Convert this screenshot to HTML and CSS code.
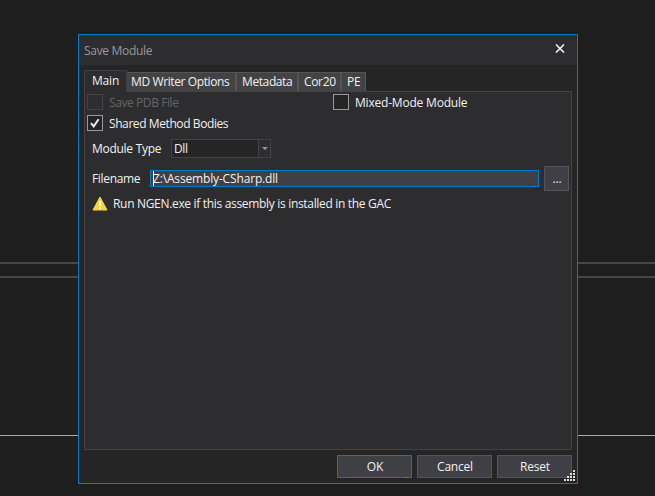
FILE: index.html
```
<!DOCTYPE html>
<html lang="en">
<head>
<meta charset="utf-8">
<title>Save Module</title>
<link rel="stylesheet" href="styles.css">
</head>
<body>
<div class="rules"></div>
<main class="dialog">
  <header class="titlebar">
    <span class="title">Save Module</span>
    <svg class="close" width="10" height="9" viewBox="0 0 10 9"><path d="M1 .5 9 8.5M9 .5 1 8.5" fill="none" stroke="#f1f1f1" stroke-width="1.6"/></svg>
  </header>
  <nav class="tabs">
    <span class="tab active t-main">Main</span>
    <span class="tab t-md">MD Writer Options</span>
    <span class="tab t-meta">Metadata</span>
    <span class="tab t-cor">Cor20</span>
    <span class="tab t-pe">PE</span>
  </nav>
  <section class="panel">
    <div class="checks">
      <label class="check tight disabled"><i class="box"></i><span>Save PDB File</span></label>
      <label class="check"><i class="box"></i><span>Mixed-Mode Module</span></label>
      <label class="check tight"><i class="box"><svg width="14" height="14" viewBox="0 0 14 14"><path d="M3 7.2 5.7 10.3 10.6 3.2" fill="none" stroke="#f1f1f1" stroke-width="2"/></svg></i><span>Shared Method Bodies</span></label>
    </div>
    <div class="row type-row">
      <span class="name type">Module Type</span>
      <div class="combo"><span>Dll</span><i class="drop"><svg width="6" height="3" viewBox="0 0 6 3"><path d="M0 0h6L3 3z" fill="#999"/></svg></i></div>
    </div>
    <div class="row file-row">
      <span class="name file">Filename</span>
      <div class="input"><i class="caret"></i><span>Z:\Assembly-CSharp.dll</span></div>
      <div class="button browse">...</div>
    </div>
    <div class="row note">
      <svg width="16" height="15" viewBox="0 0 16 15"><path d="M8 1 15 14H1z" fill="#fcd23c" stroke="#fcd23c" stroke-linejoin="round"/><path d="M7 5h2v5H7zM7 11h2v2H7z" fill="#fff"/></svg>
      <span>Run NGEN.exe if this assembly is installed in the GAC</span>
    </div>
  </section>
  <footer class="actions">
    <div class="button default">OK</div>
    <div class="button">Cancel</div>
    <div class="button">Reset</div>
  </footer>
  <svg class="grip" width="11" height="11" viewBox="0 0 11 11"><path d="M9 0h2v2H9zM6 3h2v2H6zM9 3h2v2H9zM3 6h2v2H3zM6 6h2v2H6zM9 6h2v2H9zM0 9h2v2H0zM3 9h2v2H3zM6 9h2v2H6zM9 9h2v2H9z" fill="#ddd"/></svg>
</main>
</body>
</html>
```
FILE: styles.css
```
* { box-sizing: border-box; }
body {
  margin: 0;
  width: 655px;
  height: 496px;
  overflow: hidden;
  padding: 34px 0 0 78px;
  background: #1e1e1e;
  color: #f1f1f1;
  font: 12px/16px "Open Sans", "Noto Sans", sans-serif;
  letter-spacing: -0.2px;
  white-space: nowrap;
}
.rules {
  position: absolute;
  z-index: -1;
  left: 0;
  top: 262px;
  width: 655px;
  height: 174px;
  border-top: 2px solid #464646;
  border-bottom: 1px solid #aaa;
}
.rules::before {
  content: "";
  display: block;
  margin-top: 12px;
  height: 2px;
  background: #464646;
}
.dialog {
  position: relative;
  width: 500px;
  height: 450px;
  border: 1px solid #007acc;
  background: #252526;
}
.titlebar {
  display: flex;
  justify-content: space-between;
  height: 30px;
  padding: 8px 12px 0 5px;
  background: #2d2d30;
  color: #999;
  letter-spacing: -0.3px;
}
.close { margin-top: 1px; }
.tabs {
  display: flex;
  align-items: flex-end;
  height: 26px;
  padding-left: 5px;
}
.tab {
  height: 19px;
  padding: 1px 0 0 5px;
  background: #434346;
  border: 1px solid #555558;
  border-width: 1px 1px 0 0;
}
.tab + .tab + .tab { border-left-width: 1px; }
.tab.active {
  height: 22px;
  width: 43px;
  margin-bottom: -1px;
  padding: 2px 0 0 7px;
  background: #2d2d30;
  border: 1px solid #3f3f46;
  border-bottom: 0;
  z-index: 1;
}
.tab.t-md { width: 109px; padding-left: 4px; letter-spacing: -0.39px; }
.t-meta { width: 62px; letter-spacing: -0.4px; }
.t-cor { width: 43px; letter-spacing: -0.35px; }
.t-pe { width: 25px; }
.panel {
  width: 488px;
  height: 359px;
  margin-left: 5px;
  padding: 2px;
  background: #2d2d30;
  border: 1px solid #434346;
}
.checks {
  display: grid;
  grid-template-columns: 246px 1fr;
  row-gap: 5px;
}
.check { display: flex; gap: 6px; height: 16px; line-height: 18px; }
.tight { letter-spacing: -0.41px; }
.box {
  width: 16px;
  height: 16px;
  border: 1px solid #999;
  background: #252526;
}
.box svg { display: block; }
.disabled { color: #656565; }
.disabled .box { border-color: #434346; background: #2d2d30; }
.row { display: flex; padding-left: 5px; }
.type-row { margin-top: 8px; align-items: center; }
.type { width: 79px; letter-spacing: -0.28px; }
.file { width: 58px; letter-spacing: -0.33px; }
.combo {
  display: flex;
  justify-content: space-between;
  width: 100px;
  height: 19px;
  padding-left: 2px;
  border: 1px solid #434346;
  background: #252526;
  line-height: 18px;
  letter-spacing: -0.4px;
}
.drop {
  display: grid;
  place-items: center;
  width: 12px;
  border-left: 1px solid #434346;
  background: #2d2d30;
}
.file-row { margin-top: 8px; align-items: center; }
.input {
  display: flex;
  width: 389px;
  height: 17px;
  padding-left: 2px;
  border: 1px solid #007acc;
  background: #3f3f46;
  line-height: 15px;
  letter-spacing: -0.16px;
}
.caret { width: 1px; height: 15px; margin-right: -1px; background: #fff; }
.button {
  width: 75px;
  height: 23px;
  padding-left: 1px;
  border: 1px solid #555558;
  background: #3f3f46;
  text-align: center;
  line-height: 21px;
}
.browse { width: 25px; height: 25px; margin-left: 5px; line-height: 23px; }
.default { border-color: #007acc; }
.note { margin-top: 5px; gap: 5px; letter-spacing: -0.32px; }
.actions {
  display: flex;
  justify-content: flex-end;
  gap: 5px;
  padding: 5px 5px 0 0;
}
.grip { position: absolute; right: 2px; bottom: 2px; }
```
